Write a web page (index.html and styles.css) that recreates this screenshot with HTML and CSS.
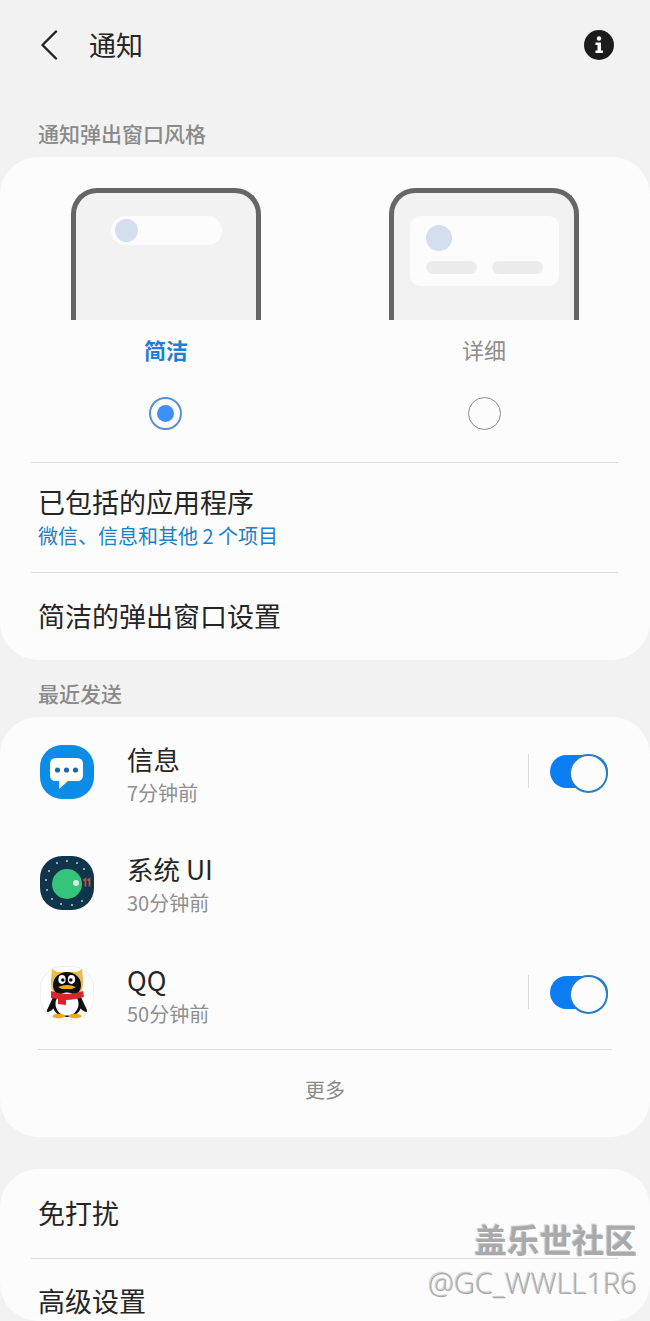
FILE: index.html
```html
<!DOCTYPE html>
<html lang="zh-CN">
<head>
  <meta charset="UTF-8">
  <meta name="viewport" content="width=device-width, initial-scale=1.0">
  <title>通知</title>
  <link rel="stylesheet" href="styles.css">
</head>
<body>
  <header class="topbar">
    <svg class="back" width="18" height="30" viewBox="0 0 18 30"><path d="M16 1.5 2.5 15 16 28.500" fill="none" stroke="#222" stroke-width="2.400" stroke-linecap="round" stroke-linejoin="round"/></svg>
    <h1 class="title">通知</h1>
    <svg class="info" width="30" height="30" viewBox="0 0 30 30">
      <circle cx="15" cy="15" r="15" fill="#1c1c1c"/>
      <circle cx="15" cy="8.500" r="2.200" fill="#fff"/>
      <path d="M11.500 12.500H17V20.500H19V23H11.500V20.500H13.500V15H11.500Z" fill="#fff"/>
    </svg>
  </header>

  <div class="section-label first">通知弹出窗口风格</div>
  <section class="card style-card">
    <div class="styles">
      <div class="style-option">
        <div class="phone">
          <div class="pill"><span class="dot small"></span></div>
        </div>
        <div class="style-name active">简洁</div>
        <div class="radio checked"></div>
      </div>
      <div class="style-option">
        <div class="phone">
          <div class="panel">
            <span class="dot"></span>
            <div class="panel-bars"><span></span><span></span></div>
          </div>
        </div>
        <div class="style-name">详细</div>
        <div class="radio"></div>
      </div>
    </div>
    <div class="row included">
      <div class="row-title">已包括的应用程序</div>
      <div class="row-sub">微信、信息和其他 2 个项目</div>
    </div>
    <div class="row simple">
      <div class="row-title">简洁的弹出窗口设置</div>
    </div>
  </section>

  <div class="section-label">最近发送</div>
  <section class="card recent-card">
    <div class="app">
      <svg class="app-icon" viewBox="0 0 54 54">
        <rect width="54" height="54" rx="22" fill="#0b8ce6"/>
        <path d="M16 13H37Q43 13 43 19V30Q43 36 37 36H28L19 44V36H16Q10 36 10 30V19Q10 13 16 13Z" fill="#fff"/>
        <circle cx="17.500" cy="25" r="2.600" fill="#1b68ad"/>
        <circle cx="26.500" cy="25" r="2.600" fill="#1b68ad"/>
        <circle cx="35.500" cy="25" r="2.600" fill="#1b68ad"/>
      </svg>
      <div class="app-text">
        <div class="app-name">信息</div>
        <div class="app-time">7分钟前</div>
      </div>
      <div class="toggle-wrap"><div class="toggle"></div></div>
    </div>
    <div class="app">
      <svg class="app-icon" viewBox="0 0 54 54">
        <rect width="54" height="54" rx="22" fill="#10354a"/>
        <g fill="#b5d3e2">
          <circle cx="27" cy="5" r="1"/><circle cx="37" cy="7" r="1"/><circle cx="17" cy="7" r="1"/>
          <circle cx="9" cy="15" r="1"/><circle cx="6" cy="24" r="1"/><circle cx="7" cy="34" r="1"/>
          <circle cx="12" cy="43" r="1"/><circle cx="21" cy="48" r="1"/><circle cx="32" cy="49" r="1"/>
          <circle cx="42" cy="45" r="1"/><circle cx="44" cy="13" r="1"/>
        </g>
        <circle cx="27" cy="28" r="15" fill="#35c47a"/>
        <circle cx="36" cy="27" r="3" fill="#d6f5e3"/>
        <path d="M43.500 24.500 45.500 23V30.500M47.500 24.500 49.500 23V30.500" fill="none" stroke="#c8553f" stroke-width="1.700"/>
      </svg>
      <div class="app-text">
        <div class="app-name">系统 UI</div>
        <div class="app-time">30分钟前</div>
      </div>
    </div>
    <div class="app last-app">
      <svg class="app-icon" viewBox="0 0 54 54">
        <rect x=".5" y=".5" width="53" height="53" rx="22" fill="#fff" stroke="#eee"/>
        <path d="M12 3 17 6H37L42 3 43 13Q44 22 40 27H14Q10 22 11 13Z" fill="#e6bd55"/>
        <ellipse cx="27" cy="19" rx="14" ry="13" fill="#0d0d0f"/>
        <ellipse cx="22" cy="13.500" rx="3.600" ry="4.400" fill="#fff"/>
        <ellipse cx="31.500" cy="13.500" rx="3.600" ry="4.400" fill="#fff"/>
        <circle cx="22.800" cy="14" r="1.800" fill="#111"/>
        <circle cx="30.800" cy="14" r="1.800" fill="#111"/>
        <path d="M18 21Q27 17 36 21Q27 27 18 21Z" fill="#efa71c"/>
        <path d="M15 27 7 44Q6 48 12 44L16 39Z" fill="#111"/>
        <path d="M39 27 47 44Q48 48 42 44L38 39Z" fill="#111"/>
        <ellipse cx="27" cy="37" rx="15" ry="14" fill="#111"/>
        <ellipse cx="27" cy="38" rx="11.500" ry="11.500" fill="#fff"/>
        <path d="M11 25Q27 31 43 25L44 31Q34 34 26 34V39L18 38V33L11 32Z" fill="#d9262c"/>
        <ellipse cx="19" cy="50" rx="6.500" ry="2.200" fill="#efa71c"/>
        <ellipse cx="35" cy="50" rx="6.500" ry="2.200" fill="#efa71c"/>
      </svg>
      <div class="app-text">
        <div class="app-name">QQ</div>
        <div class="app-time">50分钟前</div>
      </div>
      <div class="toggle-wrap"><div class="toggle"></div></div>
    </div>
    <div class="more">更多</div>
  </section>

  <section class="card bottom-card">
    <div class="row plain"><div class="row-title">免打扰</div></div>
    <div class="row plain"><div class="row-title">高级设置</div></div>
  </section>

  <div class="watermark">
    <div class="wm-name">盖乐世社区</div>
    <div class="wm-user">@GC_WWLL1R6</div>
  </div>
</body>
</html>
```

FILE: styles.css
```css
* {
  box-sizing: border-box;
}

html, body {
  height: 1321px;
}

body {
  margin: 0;
  background: #f2f2f2;
  font-family: "Noto Sans CJK SC", "Noto Sans", sans-serif;
  color: #252525;
  overflow: hidden;
  position: relative;
}

.topbar {
  display: flex;
  align-items: center;
  height: 88px;
  padding: 1px 36px 0 40px;
}

.back {
  margin-right: 31px;
}

.title {
  margin: 0;
  flex: 1;
  font-size: 27px;
  font-weight: 400;
  line-height: 36px;
}

.section-label {
  height: 29px;
  padding-left: 38px;
  font-size: 21px;
  line-height: 29px;
  font-weight: 500;
  color: #8a8a8a;
}

.section-label.first {
  margin-top: 31px;
  margin-bottom: 9px;
}

.card {
  margin: 0;
  background: #fcfcfc;
  border-radius: 38px;
}

.style-card {
  height: 503px;
  padding-top: 31px;
  margin-bottom: 19px;
}

.styles {
  display: flex;
  padding: 0 71px;
  justify-content: space-between;
  height: 274px;
}

.style-option {
  width: 190px;
  display: flex;
  flex-direction: column;
  align-items: center;
}

.phone {
  width: 100%;
  height: 132px;
  background: #f2f2f2;
  border: 5px solid #666;
  border-bottom: 0;
  border-radius: 26px 26px 0 0;
  padding-top: 23px;
  display: flex;
  justify-content: center;
  align-items: flex-start;
}

.pill {
  width: 111px;
  height: 29px;
  border-radius: 15px;
  background: #fcfcfc;
  padding: 3px 4px;
  display: flex;
}

.dot {
  display: block;
  width: 26px;
  height: 26px;
  border-radius: 50%;
  background: #d5deef;
}

.dot.small {
  width: 23px;
  height: 23px;
}

.panel {
  width: 149px;
  height: 70px;
  border-radius: 10px;
  background: #fcfcfc;
  padding: 9px 16px;
}

.panel-bars {
  display: flex;
  justify-content: space-between;
  margin-top: 10px;
}

.panel-bars span {
  width: 51px;
  height: 13px;
  border-radius: 7px;
  background: #ececec;
}

.style-name {
  margin-top: 14px;
  font-size: 22px;
  line-height: 30px;
  color: #8c8c8c;
}

.style-name.active {
  color: #1c80d6;
  font-weight: 700;
}

.radio {
  margin-top: 33px;
  width: 33px;
  height: 33px;
  border-radius: 50%;
  border: 1.500px solid #8a8a8a;
  display: flex;
  align-items: center;
  justify-content: center;
}

.radio.checked {
  margin-right: 1px;
  border: 2px solid #5b8fd6;
}

.radio.checked::after {
  content: "";
  width: 17px;
  height: 17px;
  border-radius: 50%;
  background: #3f8ffa;
}

.row {
  margin: 0 32px 0 31px;
  padding-left: 7px;
  border-top: 1px solid #dedede;
}

.row-title {
  font-size: 27px;
  line-height: 36px;
}

.row-sub {
  margin-top: 3px;
  font-size: 20px;
  line-height: 26px;
  color: #1c80c8;
}

.included {
  height: 110px;
  padding-top: 21px;
}

.simple {
  padding-top: 25px;
}

.recent-card {
  margin-top: 9px;
  height: 420px;
  padding: 28px 42px 0 40px;
}

.app {
  display: flex;
  align-items: center;
  height: 54px;
  margin-bottom: 56.500px;
}

.app.last-app {
  margin-bottom: 29px;
}

.app-icon {
  width: 54px;
  height: 54px;
  margin-right: 33px;
  flex: none;
}

.app-text {
  flex: 1;
  padding-top: 7px;
}

.app-name {
  font-size: 26.500px;
  line-height: 35px;
  margin-top: -5px;
}

.app-time {
  font-size: 20px;
  line-height: 26px;
  color: #8f8f8f;
  margin-top: 4px;
}

.toggle-wrap {
  height: 34px;
  margin-top: -2px;
  padding-left: 21px;
  border-left: 1px solid #dcdcdc;
  display: flex;
  align-items: center;
}

.toggle {
  position: relative;
  width: 58px;
  height: 33px;
  border-radius: 17px;
  background: #0a7df2;
}

.toggle::after {
  content: "";
  position: absolute;
  right: 0;
  top: -1px;
  width: 35px;
  height: 35px;
  border-radius: 50%;
  background: #fcfcfc;
  border: 2px solid #2a7cc4;
}

.more {
  margin: 0 -4px 0 -2px;
  border-top: 1px solid #dedede;
  padding-top: 26px;
  text-align: center;
  font-size: 20px;
  line-height: 27px;
  color: #8a8a8a;
}

.bottom-card {
  margin-top: 32px;
  height: 152px;
}

.plain {
  height: 89px;
  padding-top: 26px;
}

.plain:first-child {
  border-top: 0;
}

.plain + .plain {
  padding-top: 24px;
}

/* watermark sits over the last card */
.watermark {
  position: absolute;
  right: 13px;
  top: 1217px;
  text-align: right;
  color: #a9a9a9;
  text-shadow: 1px 1px 1px rgba(255, 255, 255, 0.9), -1px -1px 1px rgba(90, 90, 90, 0.35);
}

.wm-name {
  font-size: 32.500px;
  line-height: 44px;
  font-weight: 700;
}

.wm-user {
  font-family: "Open Sans", "Noto Sans", sans-serif;
  font-size: 29px;
  font-weight: 300;
  line-height: 44px;
}
```
